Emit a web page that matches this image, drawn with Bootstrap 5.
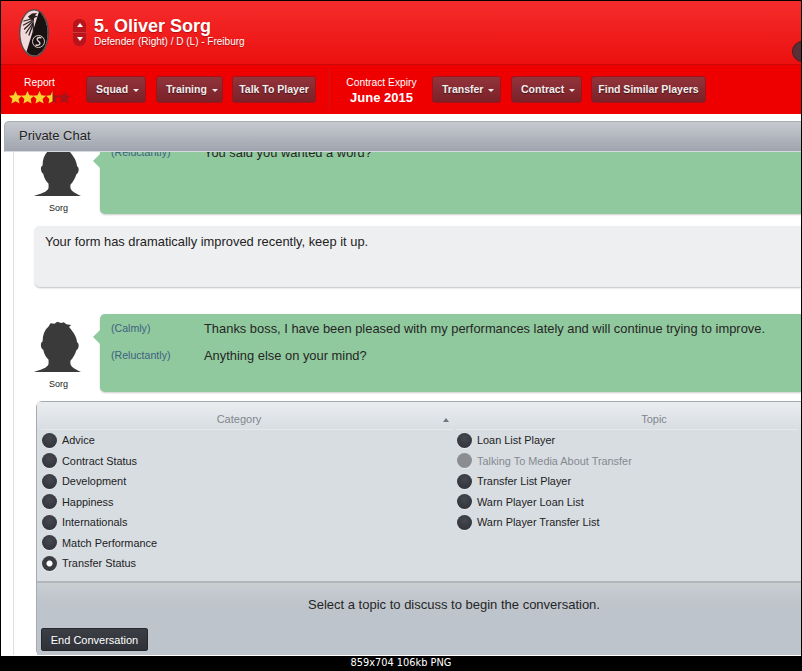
<!DOCTYPE html>
<html lang="en">
<head>
<meta charset="utf-8">
<title>Private Chat</title>
<link rel="stylesheet" href="https://cdn.jsdelivr.net/npm/bootstrap@5.3.0/dist/css/bootstrap.min.css">
<style>
html,body{height:100%;margin:0;overflow:hidden;background:#000}
body{font-family:"Liberation Sans",Arial,sans-serif;color:#222;font-size:12.9px}
.shell{width:802px;height:671px;padding:1px 1px 0 1px;background:#000;overflow:hidden}
.page{height:655px;background:#fff;overflow:hidden}
.head-top{height:64px;background:linear-gradient(#f52c2c,#ec1010);border-bottom:1px solid #c90a0a;padding-left:18px}
.crest{width:30px;height:48px;flex:none}
.stepper{width:13px;height:27px;margin-left:24px;margin-top:-1px;border-radius:6px;background:#b8141b;overflow:hidden}
.stepper span{height:13px;color:#fff}
.stepper span+span{border-top:1px solid #d03a3a}
.stepper svg{width:6px;height:4px}
.who{margin-left:8px;margin-top:-2px;color:#fff;text-shadow:0 1px 1px rgba(120,0,0,.55)}
.who-name{font-size:18px;font-weight:700;line-height:20px}
.who-sub{font-size:10px;line-height:12px}
.orb{right:-12px;top:40px;width:21px;height:21px;border-radius:50%;background:#5a3036;border:1px solid #3a2025;overflow:hidden}
.orb::after{content:"";position:absolute;left:8px;top:6px;width:4px;height:8px;background:#3a50c8}
.head-bar{height:49px;background:#ee0000;padding-top:11px}
.report{width:85px;color:#fff;font-size:10.3px;line-height:13px}
.report-label{padding-left:23px;margin-bottom:2px}
.stars{padding-left:8px}
.stars svg{width:13px;height:13px;margin-right:-.8px}
.tbtn{height:27px;margin-right:10px;padding:0 6px;font-size:10.5px;font-weight:700;color:#f5eeee;background:linear-gradient(#92343b,#7b2128);border:1px solid #a3121a;border-radius:3px;line-height:25px;text-shadow:0 1px 1px rgba(0,0,0,.5);white-space:nowrap}
.tbtn:hover{color:#fff;background:#7c2129;border-color:#a3121a}
.tbtn.dropdown-toggle{padding:0 0 0 9px;text-align:left}
.tbtn.dropdown-toggle::after{margin-left:5px;vertical-align:1px;border-top-width:.3em;border-left-width:.3em;border-right-width:.3em}
.w-squad{width:60px}
.w-training{width:67px;margin-right:9px}
.w-talk{width:84px;padding:0}
.w-transfer{width:69px}
.w-contract{width:71px;margin-right:9px}
.w-find{width:115px;padding:0}
.rule{width:1px;height:41px;margin:-7px 0 0 3px;background:#c9161a}
.expiry{width:102px;padding-left:1px;color:#fff;text-align:center;font-size:10.3px;line-height:13px}
.expiry b{display:block;font-size:13px;line-height:16px;margin-top:1px}
.gap-white{height:7px}
.titlebar{height:31px;margin-left:3px;background:linear-gradient(#c6cacf,#9fa4ae);border-top:1px solid #a8adb3;border-left:1px solid #a8adb3;border-bottom:1px solid #d8dadd;border-radius:5px 0 0 0;padding-left:14px;font-size:13px;line-height:27px;color:#222;text-shadow:0 1px 0 rgba(255,255,255,.35)}
.scroller{height:503px;margin-left:12px;border-left:1px solid #dfdfdf;overflow:hidden;background:#fff}
.scroll-in{margin-top:-14px;padding-left:20px}
.msg-row{display:flex}
.figure-col{width:66px;flex:none;padding-top:6px}
.figure-col svg{display:block;width:48px;height:52px;margin-left:-1px}
.figure-col div{font-size:9px;line-height:11px;text-align:center;margin-top:7px;color:#222;width:49px}
.bubble{position:relative;flex:1;background:#90c99d;border-radius:5px 0 0 5px;padding:1px 0 0 11px;box-shadow:0 1px 2px rgba(0,0,0,.2);min-height:76px}
.bubble::before{content:"";position:absolute;left:-7px;top:16px;border:7px solid transparent;border-left:0;border-right-color:#90c99d}
.b2{height:78px}
.line{display:flex;height:27px;align-items:center}
.line-mood{width:93px;font-size:10.6px;color:#3f5f82}
.line-text{font-size:12.9px;color:#262626}
.say{height:61px;margin:12px 0 27px 1px;background:#eeeff1;border-radius:5px 0 0 5px;padding:8px 0 0 10px;box-shadow:0 1px 2px rgba(0,0,0,.25);line-height:16px;color:#222}
.chooser{height:255px;margin:9px 0 0 2px;background:#d8dde2;border:1px solid #a7abb0;border-right:0;border-radius:6px 0 0 6px;display:flex;flex-direction:column}
.lists{flex:1;display:flex;padding-left:4px;min-height:0;background:linear-gradient(#eaedf0,#d8dde2 28px)}
.list-l{width:415px;flex:none}
.list-r{flex:1}
.colhead{height:28px;position:relative;text-align:center;font-size:11px;color:#80868d;line-height:35px;border-bottom:1px solid #e6e8eb;margin-right:3px}
.head-left{padding-right:16px}
.head-right{padding-left:54px}
.arrow{position:absolute;right:4px;top:16px;width:0;height:0;border:3px solid transparent;border-top:0;border-bottom:4px solid #70767c}
.opt{display:flex;align-items:center;height:20.5px;font-size:10.9px;color:#222;padding-left:1px}
.dot{width:15px;height:15px;border-radius:50%;background:radial-gradient(circle at 50% 35%,#45484f,#2d2f35);margin-right:5px;flex:none;box-shadow:0 1px 0 rgba(255,255,255,.4)}
.dot.on{background:radial-gradient(circle,#fff 0 2.5px,#3a3c42 3.5px)}
.opt.off{color:#85898f}
.opt.off .dot{background:#8b8d91}
.chooser-foot{height:74px;border-top:2px solid #b2b6bb;background:linear-gradient(#c9ced3,#bec4cb 30%);text-align:center;position:relative;padding:14px 0 0 70px;line-height:16px;color:#262626;font-size:13px}
.end-btn{position:absolute;left:4px;bottom:4px;width:107px;height:23px;padding:0;font-size:11px;line-height:22px;color:#fff;background:linear-gradient(#3b3e44,#2f3238);border:1px solid #26282c;border-radius:2px}
.end-btn:hover{color:#fff;background:#2f3238}
.caption{height:15px;color:#fff;background:#000;text-align:center;font-family:"DejaVu Sans",sans-serif;font-size:9.8px;line-height:14px}
</style>
</head>
<body>
<div class="shell">
  <div class="page">
    <header class="head-top d-flex align-items-center position-relative overflow-hidden">
      <svg class="crest" viewBox="0 0 30 48" aria-hidden="true">
        <ellipse cx="15" cy="24" rx="15" ry="24" fill="#5b4b4b"/>
        <ellipse cx="15" cy="24" rx="13.6" ry="22.600" fill="#f1d8da"/>
        <path d="M20 2.500C25.500 7 28.600 15 28.600 24 28.600 36.500 22.500 46.600 15 46.600 12 46.600 9.500 45 7.500 42.500Z" fill="#1a1212"/>
        <path d="M9 7.500 13 4.500 18 4 16 6.500 19 7.500 15 9 15 12 11 10Z" fill="#2a2020"/>
        <g fill="none" stroke="#2a2020" stroke-width="1.300" stroke-linecap="round">
          <path d="M12 10 5 12"/><path d="M13 11.500 4.500 16"/><path d="M13 13 5.500 20"/><path d="M13.500 14.500 7 24"/><path d="M14 15 10 26"/><path d="M14 12 14.500 24"/>
        </g>
        <circle cx="19.500" cy="32.500" r="6" fill="none" stroke="#e8dada" stroke-width=".9"/>
        <path d="M22.500 29C19 27.500 16.500 30 19.500 32.300 22.500 34.500 20.500 37 16.500 36" fill="none" stroke="#e8dada" stroke-width="1.300"/>
      </svg>
      <div class="stepper d-flex flex-column">
        <span class="d-flex align-items-center justify-content-center"><svg viewBox="0 0 6 4"><path d="M3 0 6 4H0Z" fill="#fff"/></svg></span>
        <span class="d-flex align-items-center justify-content-center"><svg viewBox="0 0 6 4"><path d="M0 0H6L3 4Z" fill="#fff"/></svg></span>
      </div>
      <div class="who">
        <div class="who-name">5. Oliver Sorg</div>
        <div class="who-sub">Defender (Right) / D (L) - Freiburg</div>
      </div>
      <span class="orb position-absolute"></span>
    </header>
    <nav class="head-bar d-flex">
      <div class="report">
        <div class="report-label">Report</div>
        <div class="stars d-flex">
          <svg viewBox="0 0 20 20"><path d="M10 0l3 6.600 7 .8-5.200 4.800 1.400 7L10 15.700 3.800 19.200l1.400-7L0 7.400l7-.8z" fill="#f6d32d"/></svg>
          <svg viewBox="0 0 20 20"><path d="M10 0l3 6.600 7 .8-5.200 4.800 1.400 7L10 15.700 3.800 19.200l1.400-7L0 7.400l7-.8z" fill="#f6d32d"/></svg>
          <svg viewBox="0 0 20 20"><path d="M10 0l3 6.600 7 .8-5.200 4.800 1.400 7L10 15.700 3.800 19.200l1.400-7L0 7.400l7-.8z" fill="#f6d32d"/></svg>
          <svg viewBox="0 0 20 20"><path d="M10 0l3 6.600 7 .8-5.200 4.800 1.400 7L10 15.700 3.800 19.200l1.400-7L0 7.400l7-.8z" fill="#a8141a"/><path d="M10 0L7 6.600 0 7.400l5.200 4.800-1.400 7L10 15.700z" fill="#f6d32d"/></svg>
          <svg viewBox="0 0 20 20"><path d="M10 0l3 6.600 7 .8-5.200 4.800 1.400 7L10 15.700 3.800 19.200l1.400-7L0 7.400l7-.8z" fill="#a8141a"/></svg>
        </div>
      </div>
      <button class="btn tbtn dropdown-toggle w-squad" type="button">Squad</button>
      <button class="btn tbtn dropdown-toggle w-training" type="button">Training</button>
      <button class="btn tbtn w-talk" type="button">Talk To Player</button>
      <span class="rule"></span>
      <div class="expiry">Contract Expiry<b>June 2015</b></div>
      <button class="btn tbtn dropdown-toggle w-transfer" type="button">Transfer</button>
      <button class="btn tbtn dropdown-toggle w-contract" type="button">Contract</button>
      <button class="btn tbtn w-find" type="button">Find Similar Players</button>
    </nav>
    <div class="gap-white"></div>
    <div class="titlebar">Private Chat</div>
    <main class="scroller">
      <div class="scroll-in">
        <div class="msg-row">
          <div class="figure-col">
            <svg viewBox="15 5 145 157" preserveAspectRatio="none" aria-hidden="true"><path d="M18 162C40 155 58 150 62 138L62 125C52 115 48 105 46 95 38 92 36 72 44 70 44 50 50 35 62 25L68 15 80 16 88 10 100 14 108 12 116 18 130 20 124 26C140 45 147 58 148 72 155 75 155 92 146 96 142 110 135 120 128 128L128 138C132 150 148 156 160 162Z" fill="#3a3a3a"/></svg>
            <div>Sorg</div>
          </div>
          <div class="bubble">
            <div class="line"><span class="line-mood">(Reluctantly)</span><span class="line-text">You said you wanted a word?</span></div>
          </div>
        </div>
        <div class="say">Your form has dramatically improved recently, keep it up.</div>
        <div class="msg-row">
          <div class="figure-col">
            <svg viewBox="15 5 145 157" preserveAspectRatio="none" aria-hidden="true"><path d="M18 162C40 155 58 150 62 138L62 125C52 115 48 105 46 95 38 92 36 72 44 70 44 50 50 35 62 25L68 15 80 16 88 10 100 14 108 12 116 18 130 20 124 26C140 45 147 58 148 72 155 75 155 92 146 96 142 110 135 120 128 128L128 138C132 150 148 156 160 162Z" fill="#3a3a3a"/></svg>
            <div>Sorg</div>
          </div>
          <div class="bubble b2">
            <div class="line"><span class="line-mood">(Calmly)</span><span class="line-text">Thanks boss, I have been pleased with my performances lately and will continue trying to improve.</span></div>
            <div class="line"><span class="line-mood">(Reluctantly)</span><span class="line-text">Anything else on your mind?</span></div>
          </div>
        </div>
        <section class="chooser">
          <div class="lists">
            <div class="list-l">
              <div class="colhead head-left">Category<span class="arrow"></span></div>
              <div class="opt"><span class="dot"></span>Advice</div>
              <div class="opt"><span class="dot"></span>Contract Status</div>
              <div class="opt"><span class="dot"></span>Development</div>
              <div class="opt"><span class="dot"></span>Happiness</div>
              <div class="opt"><span class="dot"></span>Internationals</div>
              <div class="opt"><span class="dot"></span>Match Performance</div>
              <div class="opt"><span class="dot on"></span>Transfer Status</div>
            </div>
            <div class="list-r">
              <div class="colhead head-right">Topic</div>
              <div class="opt"><span class="dot"></span>Loan List Player</div>
              <div class="opt off"><span class="dot"></span>Talking To Media About Transfer</div>
              <div class="opt"><span class="dot"></span>Transfer List Player</div>
              <div class="opt"><span class="dot"></span>Warn Player Loan List</div>
              <div class="opt"><span class="dot"></span>Warn Player Transfer List</div>
            </div>
          </div>
          <div class="chooser-foot">
            Select a topic to discuss to begin the conversation.
            <button class="btn end-btn" type="button">End Conversation</button>
          </div>
        </section>
      </div>
    </main>
  </div>
  <div class="caption">859x704 106kb PNG</div>
</div>
<script src="https://cdn.jsdelivr.net/npm/bootstrap@5.3.0/dist/js/bootstrap.bundle.min.js"></script>
</body>
</html>
